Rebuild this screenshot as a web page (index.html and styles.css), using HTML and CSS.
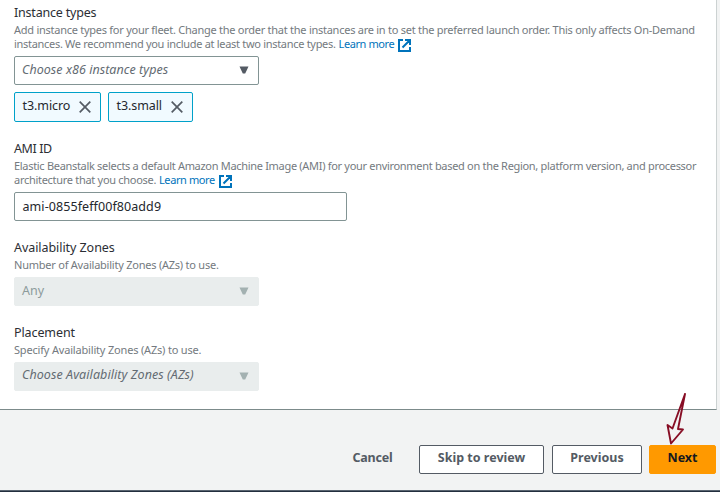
FILE: index.html
```html
<!DOCTYPE html>
<html lang="en">
<head>
<meta charset="utf-8">
<title>Configure instances</title>
<link rel="stylesheet" href="styles.css">
</head>
<body>
<main class="panel">
  <section class="field">
    <h3 class="label"><span class="l1">Instance types</span></h3>
    <p class="hint"><span class="h1">Add instance types for your fleet. Change the order that the instances are in to set the preferred launch order. This only affects On-Demand</span><br><span class="h2">instances. We recommend you include at least two instance types.</span> <a class="link"><span class="lm">Learn more</span><svg class="ext" viewBox="0 0 13 13"><path d="M5 1H1v11h11V8M7 1h5v5M12 1L4.5 8.5"/></svg></a></p>
    <div class="select"><span class="placeholder p1">Choose x86 instance types</span><svg class="caret" viewBox="0 0 10 8"><path d="M.5.5h9L6.2 7.500H3.800z"/></svg></div>
    <div class="tags">
      <div class="tag tag-micro"><span class="t1">t3.micro</span><svg class="close" viewBox="0 0 12 12"><path d="M.7.7l10.6 10.6M11.3.7L.7 11.3"/></svg></div>
      <div class="tag tag-small"><span class="t2">t3.small</span><svg class="close" viewBox="0 0 12 12"><path d="M.7.7l10.6 10.6M11.3.7L.7 11.3"/></svg></div>
    </div>
  </section>
  <section class="field">
    <h3 class="label"><span class="l2">AMI ID</span></h3>
    <p class="hint"><span class="h3">Elastic Beanstalk selects a default Amazon Machine Image (AMI) for your environment based on the Region, platform version, and processor</span><br><span class="h4">architecture that you choose.</span> <a class="link"><span class="lm">Learn more</span><svg class="ext" viewBox="0 0 13 13"><path d="M5 1H1v11h11V8M7 1h5v5M12 1L4.5 8.5"/></svg></a></p>
    <div class="input"><span class="v1">ami-0855feff00f80add9</span></div>
  </section>
  <section class="field">
    <h3 class="label"><span class="l3">Availability Zones</span></h3>
    <p class="hint"><span class="h5">Number of Availability Zones (AZs) to use.</span></p>
    <div class="select disabled"><span class="v2">Any</span><svg class="caret" viewBox="0 0 10 8"><path d="M.5.5h9L6.2 7.500H3.800z"/></svg></div>
  </section>
  <section class="field">
    <h3 class="label"><span class="l4">Placement</span></h3>
    <p class="hint"><span class="h6">Specify Availability Zones (AZs) to use.</span></p>
    <div class="select disabled"><span class="placeholder p2">Choose Availability Zones (AZs)</span><svg class="caret" viewBox="0 0 10 8"><path d="M.5.5h9L6.2 7.500H3.800z"/></svg></div>
  </section>
</main>
<footer class="actions">
  <div class="btn cancel"><span class="b1">Cancel</span></div>
  <div class="btn skip"><span class="b2">Skip to review</span></div>
  <div class="btn previous"><span class="b3">Previous</span></div>
  <div class="btn next"><span class="b4">Next</span></div>
</footer>
<div class="bottom-bar"></div>
<svg class="arrow" viewBox="0 0 24 56"><path d="M19 2L6.500 36.500 1.500 33 5 51.500 17 37.500 12 37z"/></svg>
</body>
</html>
```
FILE: styles.css
```css
* { box-sizing: border-box; }
body {
  margin: 0;
  width: 720px;
  height: 492px;
  overflow: hidden;
  position: relative;
  display: flex;
  flex-direction: column;
  background: #f2f3f3;
  font-family: "Noto Sans", "Open Sans", sans-serif;
  font-size: 12.5px;
  color: #16191f;
}
.panel {
  width: 717px;
  height: 410px;
  padding: 3px 0 0 14px;
  background: #fff;
  border-right: 1px solid #ccd2d2;
  border-bottom: 1px solid #7c8b8b;
}
.field { margin-bottom: 17px; white-space: nowrap; }
.label { margin: 0; font-size: 12.5px; font-weight: 400; line-height: 20px; color: #2b2e34; }
.hint { margin: 0 0 5px; font-size: 11px; line-height: 14px; color: #747a80; }
.l1 { letter-spacing: -0.2px; }
.l2 { letter-spacing: -0.4px; }
.l3 { letter-spacing: -0.06px; }
.l4 { letter-spacing: -0.1px; }
.h1 { letter-spacing: -0.26px; }
.h2 { letter-spacing: -0.3px; }
.h3 { letter-spacing: -0.307px; }
.h4 { letter-spacing: -0.29px; }
.h5 { letter-spacing: -0.23px; }
.h6 { letter-spacing: -0.18px; }
.lm { letter-spacing: -0.4px; }
.p1 { letter-spacing: 0.05px; }
.p2 { letter-spacing: 0.08px; padding-bottom: 2px; }
.v1 { letter-spacing: 0.08px; padding-top: 2px; }
.t1, .t2 { padding-bottom: 2px; letter-spacing: -0.08px; }
.link { color: #0073bb; }
.ext { width: 13px; height: 13px; margin: -3px 0 -3px 4px; vertical-align: -1px; fill: none; stroke: #0073bb; stroke-width: 2; }
.select, .input {
  display: flex;
  align-items: center;
  width: 245px;
  height: 29px;
  padding: 0 9px 2px 8px;
  border: 1px solid #829494;
  border-radius: 2px;
  background: #fff;
}
.select { justify-content: space-between; padding-left: 7px; }
.input { width: 333px; padding-left: 7.5px; color: #24272d; }
.placeholder { font-style: italic; color: #636b72; }
.caret { width: 10px; height: 8px; margin-top: 1px; fill: #545b64; }
.disabled { background: #e9eded; border-color: #e9eded; color: #8c9b9b; }
.disabled .caret { fill: #a3b1b1; }
.tags { display: flex; gap: 7px; margin-top: 7px; }
.tag {
  display: flex;
  align-items: center;
  justify-content: space-between;
  height: 30px;
  padding: 0 9px 2px 7.5px;
  border: 1px solid #00a1c9;
  border-radius: 2px;
  background: #f1faff;
  color: #24272d;
}
.tag-micro { width: 87px; }
.tag-small { width: 85px; }
.close { width: 12px; height: 12px; margin-top: 2px; fill: none; stroke: #545b64; stroke-width: 1.7; }
.actions { display: flex; justify-content: flex-end; height: 80px; padding: 35px 4px 0 0; }
.btn {
  display: flex;
  align-items: center;
  justify-content: center;
  height: 29px;
  padding-bottom: 5px;
  border: 1px solid #545b64;
  border-radius: 2px;
  background: #fff;
  color: #545b64;
  font-weight: 700;
  white-space: nowrap;
}
.cancel { width: 92px; padding-right: 1px; background: none; border-color: transparent; }
.b1 { letter-spacing: -0.2px; }
.skip { width: 125px; margin-right: 8px; }
.previous { width: 90px; margin-right: 7px; }
.next { width: 67px; background: #ff9900; border-color: #ff9900; color: #16191f; }
.bottom-bar { height: 2px; background: #232f3e; border-top: 1px solid #596470; }
.arrow { position: absolute; left: 666px; top: 392px; width: 24px; height: 56px; fill: none; stroke: #870d24; stroke-width: 1.9; stroke-linejoin: round; }
```
